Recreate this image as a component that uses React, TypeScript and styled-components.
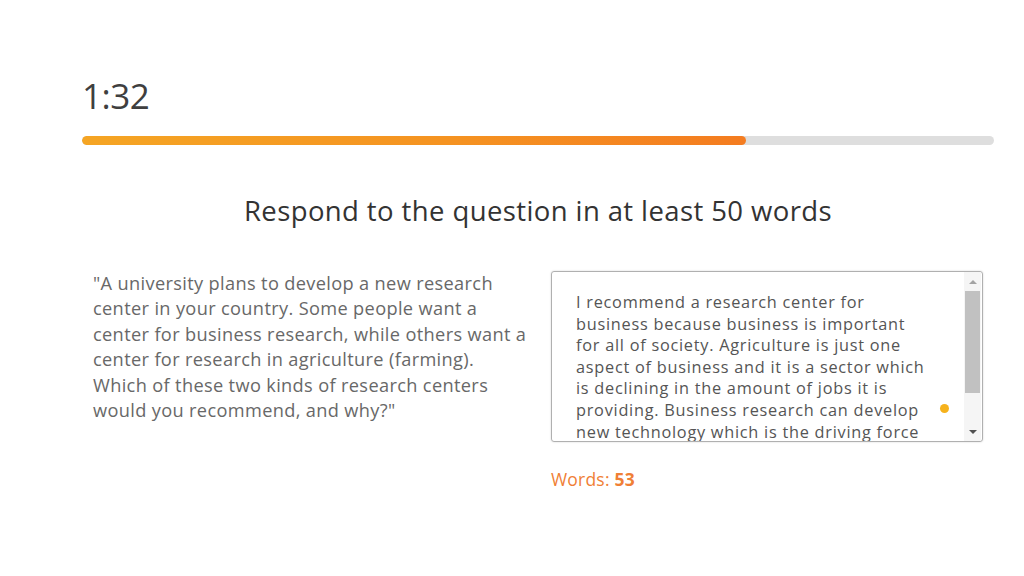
import React from 'react'
import styled, { createGlobalStyle } from 'styled-components'

const GlobalStyle = createGlobalStyle`
	html, body {
		margin: 0;
		padding: 0;
		background: #ffffff;
	}
	body {
		font-family: 'Open Sans', Lato, sans-serif;
	}
`

const Page = styled.main`
	width: 1024px;
	height: 576px;
	box-sizing: border-box;
	padding: 74px 30px 0 82px;
	display: flex;
	flex-direction: column;
`

const Timer = styled.div`
	font-size: 35px;
	line-height: 44px;
	color: #3f3f3f;
	letter-spacing: -0.5px;
`

const Track = styled.div`
	margin-top: 18px;
	height: 9px;
	border-radius: 5px;
	background: #dedede;
	overflow: hidden;
`

const Fill = styled.div`
	height: 100%;
	border-radius: 5px;
	background: linear-gradient(90deg, #f5a524 0%, #f59321 55%, #f47c20 100%);
`

const Heading = styled.h1`
	margin: 48px 0 0;
	font-weight: 400;
	font-size: 27.5px;
	line-height: 36px;
	letter-spacing: 0.4px;
	color: #333333;
	text-align: center;
`

const Columns = styled.div`
	margin-top: 42px;
	display: grid;
	grid-template-columns: 469px 432px;
`

const Question = styled.p`
	margin: 0;
	padding: 0 0 0 11px;
	width: 440px;
	font-size: 18.2px;
	line-height: 25.4px;
	letter-spacing: 0.35px;
	color: #686868;
`

const AnswerColumn = styled.div`
	display: flex;
	flex-direction: column;
	gap: 25px;
`

const Box = styled.div`
	position: relative;
	width: 432px;
	height: 171px;
	box-sizing: border-box;
	display: flex;
	border: 1px solid #b0b0b0;
	border-radius: 3px;
	box-shadow: 0 0 2px rgba(0, 0, 0, 0.18);
	overflow: hidden;
`

const Answer = styled.div`
	flex: 1;
	padding: 20px 32px 0 24px;
	overflow: hidden;
	font-size: 16.3px;
	line-height: 21.6px;
	letter-spacing: 0.75px;
	color: #555555;
`

const Scrollbar = styled.div`
	width: 17px;
	margin-right: 1px;
	display: flex;
	flex-direction: column;
	align-items: center;
	background: #f5f5f5;
`

const Arrow = styled.div<{ $down?: boolean }>`
	height: 19px;
	width: 17px;
	display: flex;
	align-items: center;
	justify-content: center;

	&::before {
		content: '';
		border-left: 4px solid transparent;
		border-right: 4px solid transparent;
		${({ $down }) => ($down ? 'border-top: 4px solid #505050;' : 'border-bottom: 4px solid #a3a3a3;')}
	}
`

const ThumbArea = styled.div`
	flex: 1;
	width: 100%;
	display: flex;
	justify-content: center;
`

const Thumb = styled.div`
	width: 15px;
	height: 102px;
	background: #c1c1c1;
`

const Dot = styled.span`
	position: absolute;
	left: 388px;
	top: 132px;
	width: 9px;
	height: 9px;
	border-radius: 50%;
	background: #f6b21c;
`

const WordCount = styled.div`
	font-size: 17.5px;
	letter-spacing: 0.2px;
	color: #f07f36;

	b {
		font-weight: 700;
	}
`

const answer =
	'I recommend a research center for business because business is important for all of society. Agriculture is just one aspect of business and it is a sector which is declining in the amount of jobs it is providing. Business research can develop new technology which is the driving force behind the modern economy.'

export default function App() {
	const progress = (746 - 82) / (994 - 82)

	return (
		<>
			<GlobalStyle />
			<Page>
				<Timer>1:32</Timer>
				<Track>
					<Fill style={{ width: `${progress * 100}%` }} />
				</Track>
				<Heading>Respond to the question in at least 50 words</Heading>
				<Columns>
					<Question>
						"A university plans to develop a new research center in your country. Some people want a center for
						business research, while others want a center for research in agriculture (farming). Which of these two
						kinds of research centers would you recommend, and why?"
					</Question>
					<AnswerColumn>
						<Box>
							<Answer>{answer}</Answer>
							<Scrollbar>
								<Arrow />
								<ThumbArea>
									<Thumb />
								</ThumbArea>
								<Arrow $down />
							</Scrollbar>
							<Dot />
						</Box>
						<WordCount>
							Words: <b>53</b>
						</WordCount>
					</AnswerColumn>
				</Columns>
			</Page>
		</>
	)
}
